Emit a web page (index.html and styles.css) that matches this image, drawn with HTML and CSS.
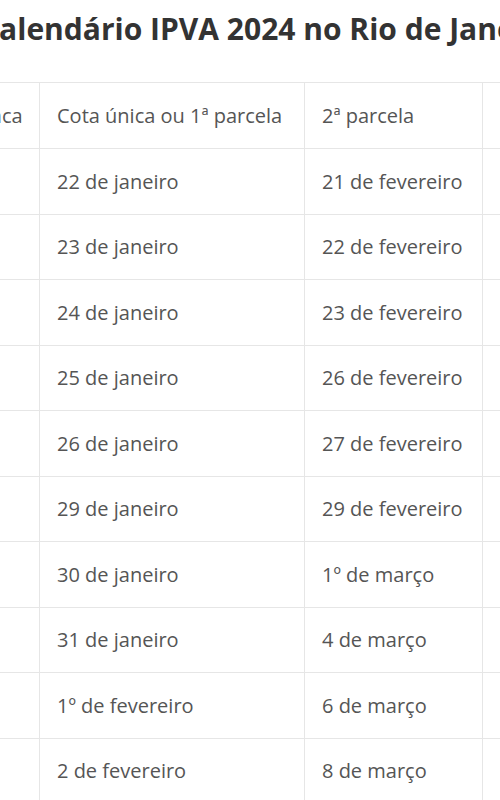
FILE: index.html
```html
<!DOCTYPE html>
<html lang="pt-BR">
<head>
<meta charset="utf-8">
<title>Calendário IPVA 2024 no Rio de Janeiro</title>
<link rel="stylesheet" href="styles.css">
</head>
<body>
<div class="page">
  <h1 class="title">Calendário IPVA 2024 no Rio de Janeiro</h1>
  <table class="cal">
    <colgroup>
      <col class="c1"><col class="c2"><col class="c3"><col class="c4">
    </colgroup>
    <thead>
      <tr><th>Final da placa</th><th>Cota única ou 1ª parcela</th><th>2ª parcela</th><th>3ª parcela</th></tr>
    </thead>
    <tbody>
      <tr><td>1</td><td>22 de janeiro</td><td>21 de fevereiro</td><td>21 de março</td></tr>
      <tr><td>2</td><td>23 de janeiro</td><td>22 de fevereiro</td><td>22 de março</td></tr>
      <tr><td>3</td><td>24 de janeiro</td><td>23 de fevereiro</td><td>25 de março</td></tr>
      <tr><td>4</td><td>25 de janeiro</td><td>26 de fevereiro</td><td>26 de março</td></tr>
      <tr><td>5</td><td>26 de janeiro</td><td>27 de fevereiro</td><td>27 de março</td></tr>
      <tr><td>6</td><td>29 de janeiro</td><td>29 de fevereiro</td><td>4 de abril</td></tr>
      <tr><td>7</td><td>30 de janeiro</td><td>1º de março</td><td>5 de abril</td></tr>
      <tr><td>8</td><td>31 de janeiro</td><td>4 de março</td><td>8 de abril</td></tr>
      <tr><td>9</td><td>1º de fevereiro</td><td>6 de março</td><td>9 de abril</td></tr>
      <tr><td>0</td><td>2 de fevereiro</td><td>8 de março</td><td>10 de abril</td></tr>
    </tbody>
  </table>
</div>
</body>
</html>
```
FILE: styles.css
```css
html, body {
  margin: 0;
  padding: 0;
  background: #ffffff;
}
body {
  width: 500px;
  height: 800px;
  overflow: hidden;
  font-family: "Open Sans", "Noto Sans", sans-serif;
}
.page {
  margin-left: -122px;
  width: 900px;
}
.title {
  margin: 0;
  padding: 11px 0 0 102px;
  font-size: 30px;
  line-height: 36px;
  font-weight: 700;
  color: #333333;
  white-space: nowrap;
}
.cal {
  margin-top: 35px;
  border-collapse: collapse;
  table-layout: fixed;
  width: 804px;
  color: #555555;
  font-size: 20px;
}
.c1 { width: 161px; }
.c2 { width: 265px; }
.c3 { width: 178px; }
.c4 { width: 200px; }
.cal th,
.cal td {
  border: 1px solid #e6e6e6;
  padding: 19px 16px 19px 17px;
  line-height: 27px;
  text-align: left;
  vertical-align: middle;
  font-weight: 400;
  white-space: nowrap;
  overflow: hidden;
}
.cal td {
  padding-top: 18.75px;
  padding-bottom: 18.75px;
}
```
